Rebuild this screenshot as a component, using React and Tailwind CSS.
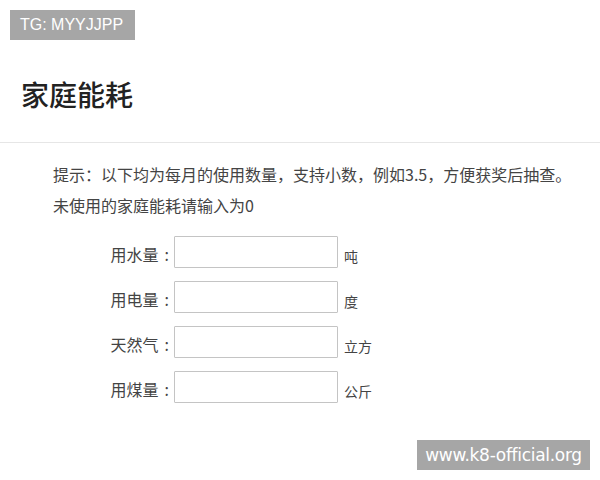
import React from "react";

const rows = [
  { label: "用水量", unit: "吨" },
  { label: "用电量", unit: "度" },
  { label: "天然气", unit: "立方" },
  { label: "用煤量", unit: "公斤" },
];

const App = () => {
  return (
    <div className="relative w-[600px] h-[480px] bg-white overflow-hidden font-['Noto_Sans_CJK_SC',sans-serif] text-[#333]">
      {/* watermark top */}
      <div className="absolute left-[10px] top-[10px] h-[30px] w-[125px] bg-[#a6a6a6] text-white text-[16px] leading-[30px] pl-[10px] font-['Liberation_Sans',sans-serif]">
        TG: MYYJJPP
      </div>

      <div className="h-[143px] border-b border-[#e6e6e6] pt-[74px] pl-[21px]">
        <h1 className="text-[28px] leading-[40px] font-medium text-[#222]">家庭能耗</h1>
      </div>

      <div className="pt-[16px] pl-[53px] text-[16px] leading-[31px] text-[#444]">
        <p>提示：以下均为每月的使用数量，支持小数，例如3.5，方便获奖后抽查。</p>
        <p>未使用的家庭能耗请输入为0</p>
      </div>

      <div className="mt-[15px] flex flex-col gap-[13px]">
        {rows.map((row) => (
          <div key={row.label} className="flex items-center h-[32px]">
            <label className="w-[174px] pr-[5px] flex justify-end items-center text-[16px] text-[#444] pt-[4px]">
              <span>{row.label}</span>
              <span className="ml-[6px]">:</span>
            </label>
            <input
              type="text"
              className="w-[164px] h-[32px] border border-[#c4c4c4] rounded-[1px] outline-none"
            />
            <span className="ml-[6px] text-[14px] text-[#444] pt-[8px]">{row.unit}</span>
          </div>
        ))}
      </div>

      {/* watermark bottom */}
      <div className="absolute left-[417px] top-[440px] h-[30px] w-[173px] bg-[#a6a6a6] text-white text-[17px] leading-[30px] text-center font-['DejaVu_Sans',sans-serif] tracking-[-0.3px]">
        www.k8-official.org
      </div>
    </div>
  );
};

export default App;
